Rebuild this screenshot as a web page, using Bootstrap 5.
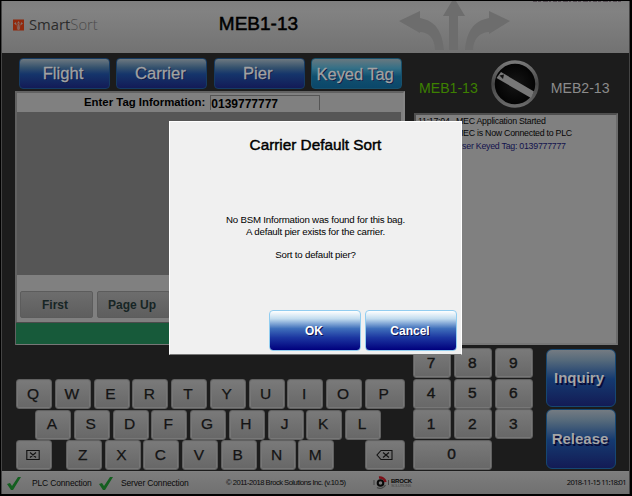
<!DOCTYPE html>
<html lang="en">
<head>
<meta charset="utf-8">
<title>SmartSort</title>
<link href="https://cdn.jsdelivr.net/npm/bootstrap@5.3.0/dist/css/bootstrap.min.css" rel="stylesheet">
<style>
body{background:#000;font-family:"Liberation Sans",Arial,sans-serif;width:632px;height:496px;overflow:hidden;color:#000;line-height:1.2}
.screen{margin:1px 0 0 1px;width:629px;height:493px;background:#1c1c1c;border-left:1px solid #444;border-right:1px solid #444}
.topbar{height:52px;background:linear-gradient(#7f7f7f,#828282 20%,#727272);padding-left:11px}
.brand-mark,.brand-name{margin-top:-5px}
.brand-name{font-family:"Open Sans","Noto Sans",sans-serif;font-size:14.8px;color:#2b2b2b;margin-left:5px}
.brand-name span{color:#4c4c4c;font-weight:300}
.station{font-size:19px;-webkit-text-stroke:.5px #000;margin:-5px 0 0 121px}
.arrows{margin-left:98px}
.trace{right:8px;top:0}
.upper{height:295px}
.left-col{width:412px;padding:5px 0 0 13px}
.tabs{padding-left:4px;gap:6.4px}
.btn-tab{width:91px;height:31px;padding:0 3px 0 0;border:1px solid #163b63;border-radius:4px;color:#a2a2a2;font-size:16.6px;background:linear-gradient(#6d7880,#34516d 30%,#15356b 52%,#131b57);text-shadow:1px 1px 0 #101a45;-webkit-text-stroke:.3px #a2a2a2;line-height:28px;white-space:nowrap}
.btn-tab:hover{color:#a2a2a2}
.btn-tab.on{background:linear-gradient(#68787f,#347087 32%,#10506f 60%,#0b476a);border-color:#17506c;font-size:16.4px}
.panel{width:390px;height:254px;margin-top:2px;background:#808080;border:2px solid #626262;border-right-color:#858585;border-bottom:1px solid #777}
.entry-row{height:19px;padding-left:67px;font-size:12px;font-weight:700}
.entry-row label{font-size:11.4px}
.entry-row .field{width:110px;height:15px;border:1px solid #555;border-bottom:0;margin-left:5px;line-height:16px}
.grid-area{height:163px;background:#565656;margin-right:2px}
.pager{height:47px;padding:16px 2px 0 3px;gap:4px}
.btn-page{width:73px;height:27px;padding:0 3px 0 0;border:1px solid #5c5c5c;border-radius:2px;background:linear-gradient(#6d6d6d,#5e5e5e);font-size:12px;font-weight:700;line-height:24px;color:#172525}
.okbar{height:22px;background:#175a3a;border-top:1px solid #4c4c4c;margin:0 -1px}
.selector{height:60px;font-size:14.1px;padding:10px 0 0 5px}
.selector svg{margin:-8px 12px 0 13px}
.sel-a{color:#3d8000}.sel-b{color:#8b8b8b}
.log{width:204px;height:232px;background:#808080;border:2px solid #4f4f4f;border-right-color:#6b6b6b;border-bottom-color:#777;font-size:8.8px;letter-spacing:-.25px;line-height:12.4px;padding:0 0 0 2px;color:#060606}
.log time{display:inline-block;width:38px}
.log .keyed{color:#12124d}
.lower{padding-left:14px;height:123px}
.keyb{width:397px;padding-top:31px}
.keyc{height:30px;background:linear-gradient(#7a7a7a,#676767);border:1px solid #606060;border-radius:3px;font-size:15.5px;color:#141414;-webkit-text-stroke:.25px #141414;display:flex;align-items:center;justify-content:center;box-shadow:inset 0 0 0 1px #777}
.keyrow{display:flex;gap:2.75px;margin-bottom:.6px}
.keyrow .keyc{width:36px;padding-right:2px}
.keyrow .wide{width:40px}
.row-asdf{padding-left:19px}
.key-z{margin-left:11px}
.pad{width:133px;padding-right:13px;display:grid;grid-template-columns:38px 38px 38px;gap:.6px 3.2px;align-content:start}
.pad .keyc{-webkit-text-stroke:.4px #141414;padding-right:2px}
.zero{grid-column:span 2}
.acts{display:flex;flex-direction:column;gap:2px;padding-top:1px}
.btn-act{width:70px;height:58px;border:1px solid #164772;border-radius:6px;padding:0 4px 0 0;color:#a5a5a5;font-weight:700;background:linear-gradient(#747b82,#566a7b 18%,#153a70 52%,#131b55);text-shadow:1.5px 1.5px 0 #070b38;font-size:15px}
.btn-act:last-child{height:60px;padding-right:2px}
.foot{height:23px;background:linear-gradient(#7d7d7d,#707070);border-top:1px solid #808080;font-size:8.5px;padding:0 3px 0 5px;color:#0a0a0a;letter-spacing:-.16px}
.foot span{white-space:nowrap}
.foot .tiny{font-size:7.6px;letter-spacing:-.5px;margin-left:40px}
.plc{margin-left:11px;width:59px}
.srv{margin-left:8px;width:65px}
.brock{margin-left:28px}
.stamp{font-family:"Noto Sans","Open Sans",sans-serif;font-size:7.6px;letter-spacing:-.66px}
.dialog-box{position:absolute;left:169px;top:121px;width:293px;height:234px;background:#f0f0f0;border:1px solid #fff;border-bottom-color:#777;z-index:5}
.dialog-box h1{font-size:15.3px;font-weight:400;-webkit-text-stroke:.45px #000;margin:14px 0 0;line-height:18px}
.dialog-box p{font-size:9.7px;letter-spacing:-.2px;line-height:11.8px;margin:60px 0 0;height:96px}
.btn-dlg{width:92px;height:41px;padding:0 2px 0 0;border:1px solid #92cdf0;border-radius:4px;color:#fff;font-size:12px;font-weight:700;line-height:36px;background:linear-gradient(#fff,#c2dcef 20%,#3f6fbb 45%,#1c37a1 68%,#00007d);text-shadow:1px 1px 0 #101050}
.btn-dlg:hover{color:#fff}
</style>
</head>
<body>
<div class="screen">
  <header class="topbar position-relative d-flex align-items-center">
    <svg class="brand-mark" width="11" height="12" viewBox="0 0 11 12"><path fill="#91290d" d="M0 .5h11v11H0z"/><path d="M5.500 11V5M2.500 4.500c1.500 0 2 2 2 6M8.500 4.500c-1.500 0-2 2-2 6" stroke="#857069" stroke-width=".8" fill="none"/><path d="M5.500 2 7 4.500H4zM1 4.500 3 3v3zM10 4.500 8 3v3z" fill="#857069"/></svg>
    <div class="brand-name">Smart<span>Sort</span></div>
    <div class="station">MEB1-13</div>
    <svg class="arrows" width="116" height="52" viewBox="0 0 116 52"><g fill="#6d6d6d"><path d="M3 20 24 10v7c15 3 22 12 24 32H39c0-12-7-18-15-18v1z"/><path d="M114 20 93 10v7C78 20 71 29 69 49h8c0-12 8-18 16-18v2z"/><path d="M53 49V15h-6L56 0h4l9 15h-7v34z"/></g></svg>
    <svg class="trace position-absolute" width="88" height="2"><path d="M0 .5h88" stroke="#5a5158" stroke-dasharray="4 1 3 2 5 1 2 2"/></svg>
  </header>
  <main>
    <div class="upper d-flex">
      <section class="left-col">
        <div class="tabs d-flex">
          <button class="btn btn-tab">Flight</button><button class="btn btn-tab">Carrier</button><button class="btn btn-tab">Pier</button><button class="btn btn-tab on">Keyed Tag</button>
        </div>
        <div class="panel">
          <div class="entry-row d-flex align-items-center"><label>Enter Tag Information:</label><div class="field">0139777777</div></div>
          <div class="grid-area"></div>
          <div class="pager d-flex"><button class="btn btn-page">First</button><button class="btn btn-page">Page Up</button></div>
          <div class="okbar"></div>
        </div>
      </section>
      <section>
        <div class="selector d-flex align-items-center">
          <span class="sel-a">MEB1-13</span>
          <svg width="48" height="48" viewBox="0 0 48 48">
            <defs>
              <linearGradient id="rim" x2="0" y2="1"><stop stop-color="#777"/><stop offset=".5" stop-color="#454545"/><stop offset="1" stop-color="#6a6a6a"/></linearGradient>
              <radialGradient id="face"><stop stop-color="#151515"/><stop offset="1" stop-color="#020202"/></radialGradient>
            </defs>
            <circle cx="24" cy="24" r="22" fill="url(#face)" stroke="url(#rim)" stroke-width="3.500"/>
            <path d="M10 12 43 31.500 40 38 5.500 18z" fill="#777"/>
            <path d="M8.500 15.500 13 14.500 12 19z" fill="#111"/>
          </svg>
          <span class="sel-b">MEB2-13</span>
        </div>
        <div class="log">
          <div><time>11:17:04</time>MEC Application Started</div>
          <div><time>11:17:04</time>MEC is Now Connected to PLC</div>
          <div class="keyed"><time>11:18:00</time>User Keyed Tag: 0139777777</div>
        </div>
      </section>
    </div>
    <div class="lower d-flex">
      <section class="keyb">
        <div class="keyrow"><div class="keyc">Q</div><div class="keyc">W</div><div class="keyc">E</div><div class="keyc">R</div><div class="keyc">T</div><div class="keyc">Y</div><div class="keyc">U</div><div class="keyc">I</div><div class="keyc">O</div><div class="keyc wide">P</div></div>
        <div class="keyrow row-asdf"><div class="keyc">A</div><div class="keyc">S</div><div class="keyc">D</div><div class="keyc">F</div><div class="keyc">G</div><div class="keyc">H</div><div class="keyc">J</div><div class="keyc">K</div><div class="keyc">L</div></div>
        <div class="keyrow">
          <div class="keyc"><svg width="14" height="12" viewBox="0 0 14 12" fill="none" stroke="#111"><path d="M.8 1.500h12.400v9H.8zM4 3.500l6 5M10 3.500l-6 5" stroke-width="1.100"/></svg></div>
          <div class="keyc key-z">Z</div><div class="keyc">X</div><div class="keyc">C</div><div class="keyc">V</div><div class="keyc">B</div><div class="keyc">N</div><div class="keyc">M</div>
          <div class="keyc wide ms-auto me-2"><svg width="17" height="12" viewBox="0 0 17 12" fill="none" stroke="#111"><path d="M5 1.500h11v9H5L1 6zM7 3.500l6 5M13 3.500l-6 5" stroke-width="1.100"/></svg></div>
        </div>
      </section>
      <section class="pad">
        <div class="keyc">7</div><div class="keyc">8</div><div class="keyc">9</div>
        <div class="keyc">4</div><div class="keyc">5</div><div class="keyc">6</div>
        <div class="keyc">1</div><div class="keyc">2</div><div class="keyc">3</div>
        <div class="keyc zero">0</div>
      </section>
      <section class="acts"><button class="btn btn-act">Inquiry</button><button class="btn btn-act">Release</button></section>
    </div>
  </main>
  <footer class="foot d-flex align-items-center">
    <svg width="14" height="15" viewBox="0 0 14 15"><path d="M0 8 3 7l2 3L11 1h3L6 14H4z" fill="#145f20"/></svg>
    <span class="plc">PLC Connection</span>
    <svg class="ms-2" width="14" height="15" viewBox="0 0 14 15"><path d="M0 8 3 7l2 3L11 1h3L6 14H4z" fill="#145f20"/></svg>
    <span class="srv">Server Connection</span>
    <span class="tiny">© 2011-2018 Brock Solutions Inc. (v.10.5)</span>
    <svg class="brock" width="42" height="16" viewBox="0 0 42 16">
      <path d="M1 5v5M15.500 5v5" stroke="#444"/><circle cx="7.500" cy="8" r="2.800" fill="none" stroke="#080808" stroke-width="2"/><path d="M6 2.500A6 6 0 0 1 12.500 7" fill="none" stroke="#7b1018" stroke-width="2.500"/><path d="M12.500 10A6 6 0 0 1 4 12.500" fill="none" stroke="#444" stroke-width="1.200"/>
      <text x="18" y="8" font-size="6" font-weight="900" textLength="21" fill="#050505">BROCK</text><text x="18" y="12" font-size="4" textLength="20" fill="#444">SOLUTIONS</text>
    </svg>
    <span class="stamp ms-auto">2018-11-15 11:18:01</span>
  </footer>
</div>
<div class="dialog-box text-center" role="dialog">
  <h1>Carrier Default Sort</h1>
  <p>No BSM Information was found for this bag.<br>A default pier exists for the carrier.<br><br>Sort to default pier?</p>
  <div class="d-flex justify-content-end gap-1 pe-1"><button class="btn btn-dlg">OK</button><button class="btn btn-dlg">Cancel</button></div>
</div>
</body>
</html>
